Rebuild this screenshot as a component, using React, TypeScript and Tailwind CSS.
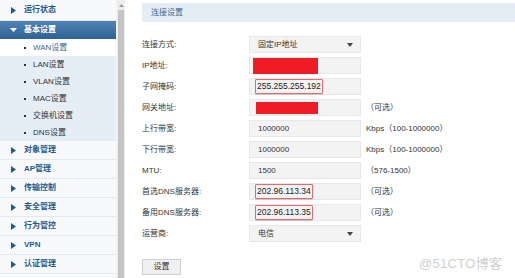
import React from "react";

const FONT = "font-['Liberation_Sans','Noto_Sans_CJK_SC',sans-serif]";

const SUB_ITEMS = ["WAN设置", "LAN设置", "VLAN设置", "MAC设置", "交换机设置", "DNS设置"];
const MAIN_ITEMS = ["对象管理", "AP管理", "传输控制", "安全管理", "行为管控", "VPN", "认证管理"];

function RightArrow() {
  return (
    <svg width="5" height="7" viewBox="0 0 5 7" className="shrink-0">
      <polygon points="0,0 5,3.5 0,7" fill="#1d5c92" />
    </svg>
  );
}

function MainItem({ label, h = "h-[19px]" }: { label: string; h?: string }) {
  return (
    <div className={`${h} flex items-center border-b border-[#e6e9ec] bg-[#f8f9fa]`}>
      <div className="w-[24px] pl-[11px] flex items-center">
        <RightArrow />
      </div>
      <span className="text-[8px] font-bold text-[#1f5a8e]">{label}</span>
    </div>
  );
}

type Field = {
  label: string;
  value?: string;
  select?: boolean;
  redFill?: { w: string; ml: string; h: string };
  boxed?: string;
  hint?: string;
};

const FIELDS: Field[] = [
  { label: "连接方式:", value: "固定IP地址", select: true },
  { label: "IP地址:", redFill: { w: "w-[65px]", ml: "ml-[3px]", h: "h-[16px]" } },
  { label: "子网掩码:", boxed: "255.255.255.192" },
  { label: "网关地址:", redFill: { w: "w-[62px]", ml: "ml-[6px]", h: "h-[12px]" }, hint: "（可选）" },
  { label: "上行带宽:", value: "1000000", hint: "Kbps（100-1000000）" },
  { label: "下行带宽:", value: "1000000", hint: "Kbps（100-1000000）" },
  { label: "MTU:", value: "1500", hint: "（576-1500）" },
  { label: "首选DNS服务器:", boxed: "202.96.113.34", hint: "（可选）" },
  { label: "备用DNS服务器:", boxed: "202.96.113.35", hint: "（可选）" },
  { label: "运营商:", value: "电信", select: true },
];

function FormRow({ f }: { f: Field }) {
  return (
    <div className="h-[17px] flex items-center">
      <span className="w-[107px] text-[8px] text-[#333]">{f.label}</span>
      <div className="w-[112px] h-[17px] flex items-center bg-[#f3f3f3] border border-[#e7e7e7]">
        {f.redFill && <div className={`${f.redFill.w} ${f.redFill.ml} ${f.redFill.h} bg-[#ee1c25]`} />}
        {f.boxed && (
          <div className="ml-[5px] h-[15px] px-[1px] flex items-center border border-[#e8686c] rounded-[1px] shadow-[0_1px_1px_rgba(0,0,0,0.15)] text-[8.5px] text-[#222]">
            {f.boxed}
          </div>
        )}
        {f.value && <span className="pl-[8px] text-[8px] text-[#333]">{f.value}</span>}
        {f.select && (
          <svg width="6" height="4" viewBox="0 0 6 4" className="ml-auto mr-[7px]">
            <polygon points="0,0 6,0 3,4" fill="#444" />
          </svg>
        )}
      </div>
      {f.hint && <span className="ml-[5px] text-[8px] text-[#333]">{f.hint}</span>}
    </div>
  );
}

export default function App() {
  return (
    <div className={`${FONT} relative w-[515px] h-[278px] overflow-hidden bg-white flex`}>
      {/* 左侧菜单 */}
      <div className="w-[116px] shrink-0 flex flex-col bg-[#f8f9fa]">
        <MainItem label="运行状态" h="h-[21px]" />
        <div className="h-[18px] flex items-center bg-gradient-to-b from-[#4f84b4] to-[#2e6296]">
          <div className="w-[24px] pl-[10px] flex items-center">
            <svg width="7" height="4" viewBox="0 0 7 4">
              <polygon points="0,0 7,0 3.5,4" fill="#fff" />
            </svg>
          </div>
          <span className="text-[8px] font-bold text-white">基本设置</span>
        </div>
        {SUB_ITEMS.map((s, i) => (
          <div key={s} className={`h-[17px] flex items-center ${i === 0 ? "bg-white" : "bg-[#e4eef4]"}`}>
            <div className="w-[33px] pl-[24px]">
              <div className="w-[2px] h-[2px] bg-[#1d3550]" />
            </div>
            <span className={`text-[8px] ${i === 0 ? "text-[#3b6a98]" : "text-[#333]"}`}>{s}</span>
          </div>
        ))}
        {MAIN_ITEMS.map((m) => (
          <MainItem key={m} label={m} />
        ))}
      </div>

      {/* 滚动条 */}
      <div className="w-[9px] shrink-0 flex flex-col bg-[#ededed] border-l border-[#f5f5f5]">
        <div className="h-[10px] flex items-center justify-center">
          <svg width="5" height="3" viewBox="0 0 5 3">
            <polygon points="0,3 5,3 2.5,0" fill="#9a9a9a" />
          </svg>
        </div>
        <div className="flex-1 mx-[1px] bg-[#c4c4c4]" />
      </div>

      {/* 内容 */}
      <div className="flex-1 min-w-0 pl-[17px] pt-[3px] flex flex-col">
        <div className="h-[19px] flex items-center pl-[9px] bg-[#e4edf3]">
          <span className="text-[8px] text-[#3a6a96]">连接设置</span>
        </div>
        <div className="mt-[14px] flex flex-col gap-[4px]">
          {FIELDS.map((f) => (
            <FormRow key={f.label} f={f} />
          ))}
        </div>
        <button className="mt-[17px] w-[39px] h-[16px] flex items-center justify-center bg-[#f0f0f0] border border-[#cfcfcf] text-[8px] text-[#333]">
          设置
        </button>
      </div>

      {/* 水印 */}
      <div className="absolute left-[419px] top-[254px] text-[13px] text-[#d0d0d0] tracking-[0.3px]">@51CTO博客</div>
    </div>
  );
}
